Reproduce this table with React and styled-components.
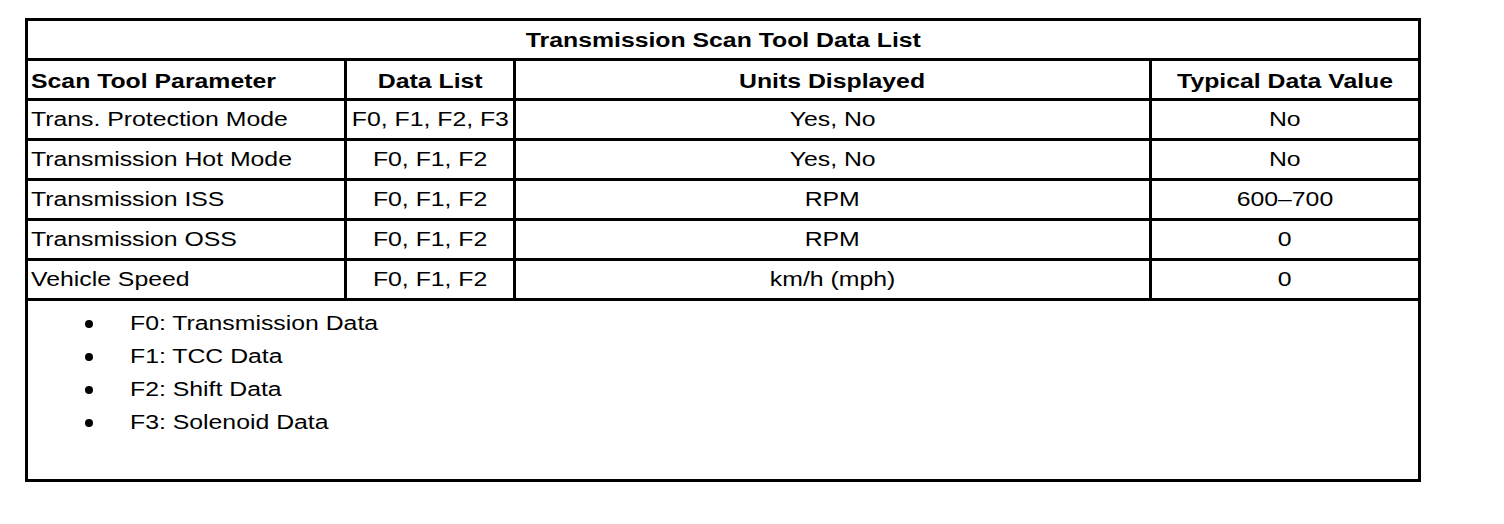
import React from 'react'
import styled, { createGlobalStyle } from 'styled-components'

const GlobalStyle = createGlobalStyle`
  body {
    margin: 0;
    background: #fff;
    font-family: "Liberation Sans", Arial, sans-serif;
    color: #000;
  }
`

const headers = ['Scan Tool Parameter', 'Data List', 'Units Displayed', 'Typical Data Value']

const rows = [
  ['Trans. Protection Mode', 'F0, F1, F2, F3', 'Yes, No', 'No'],
  ['Transmission Hot Mode', 'F0, F1, F2', 'Yes, No', 'No'],
  ['Transmission ISS', 'F0, F1, F2', 'RPM', '600–700'],
  ['Transmission OSS', 'F0, F1, F2', 'RPM', '0'],
  ['Vehicle Speed', 'F0, F1, F2', 'km/h (mph)', '0'],
]

const notes = ['F0: Transmission Data', 'F1: TCC Data', 'F2: Shift Data', 'F3: Solenoid Data']

export default function App() {
  return (
    <Page>
      <GlobalStyle />
      <Table>
        <Title>
          <Text $bold>Transmission Scan Tool Data List</Text>
        </Title>
        {headers.map((h, i) => (
          <HeadCell key={h} $left={i === 0}>
            <Text $bold $left={i === 0}>{h}</Text>
          </HeadCell>
        ))}
        {rows.map((row) =>
          row.map((v, i) => (
            <Cell key={row[0] + i} $left={i === 0}>
              <Text $left={i === 0}>{v}</Text>
            </Cell>
          ))
        )}
        <Notes>
          {notes.map((n) => (
            <Note key={n}>
              <Bullet />
              <Text $left>{n}</Text>
            </Note>
          ))}
        </Notes>
      </Table>
    </Page>
  )
}

const Page = styled.div`
  padding: 18px 0 0 25px;
`

const Table = styled.div`
  display: grid;
  grid-template-columns: 316px 166px 633px 266px;
  grid-template-rows: repeat(7, 37px) 178px;
  gap: 3px;
  padding: 3px;
  width: max-content;
  background: #000;
`

const Cell = styled.div`
  display: flex;
  align-items: center;
  justify-content: ${(p) => (p.$left ? 'flex-start' : 'center')};
  padding: 0 0 1px ${(p) => (p.$left ? '3px' : '0')};
  background: #fff;
  overflow: hidden;
`

const HeadCell = styled(Cell)`
  padding-top: 4px;
  padding-bottom: 0;
`

const Title = styled(Cell)`
  grid-column: 1 / -1;
  padding: 1px 0 0;
`

const Text = styled.span`
  display: inline-block;
  font-size: 20px;
  line-height: 23px;
  font-weight: ${(p) => (p.$bold ? 700 : 400)};
  white-space: nowrap;
  transform: scaleX(1.24);
  transform-origin: ${(p) => (p.$left ? 'left' : 'center')} center;
`

const Notes = styled.div`
  grid-column: 1 / -1;
  padding-top: 6px;
  background: #fff;
`

const Note = styled.div`
  display: flex;
  align-items: center;
  height: 33px;
  padding-left: 57px;
`

const Bullet = styled.span`
  width: 8px;
  height: 8px;
  margin-right: 37px;
  border-radius: 50%;
  background: #000;
`
